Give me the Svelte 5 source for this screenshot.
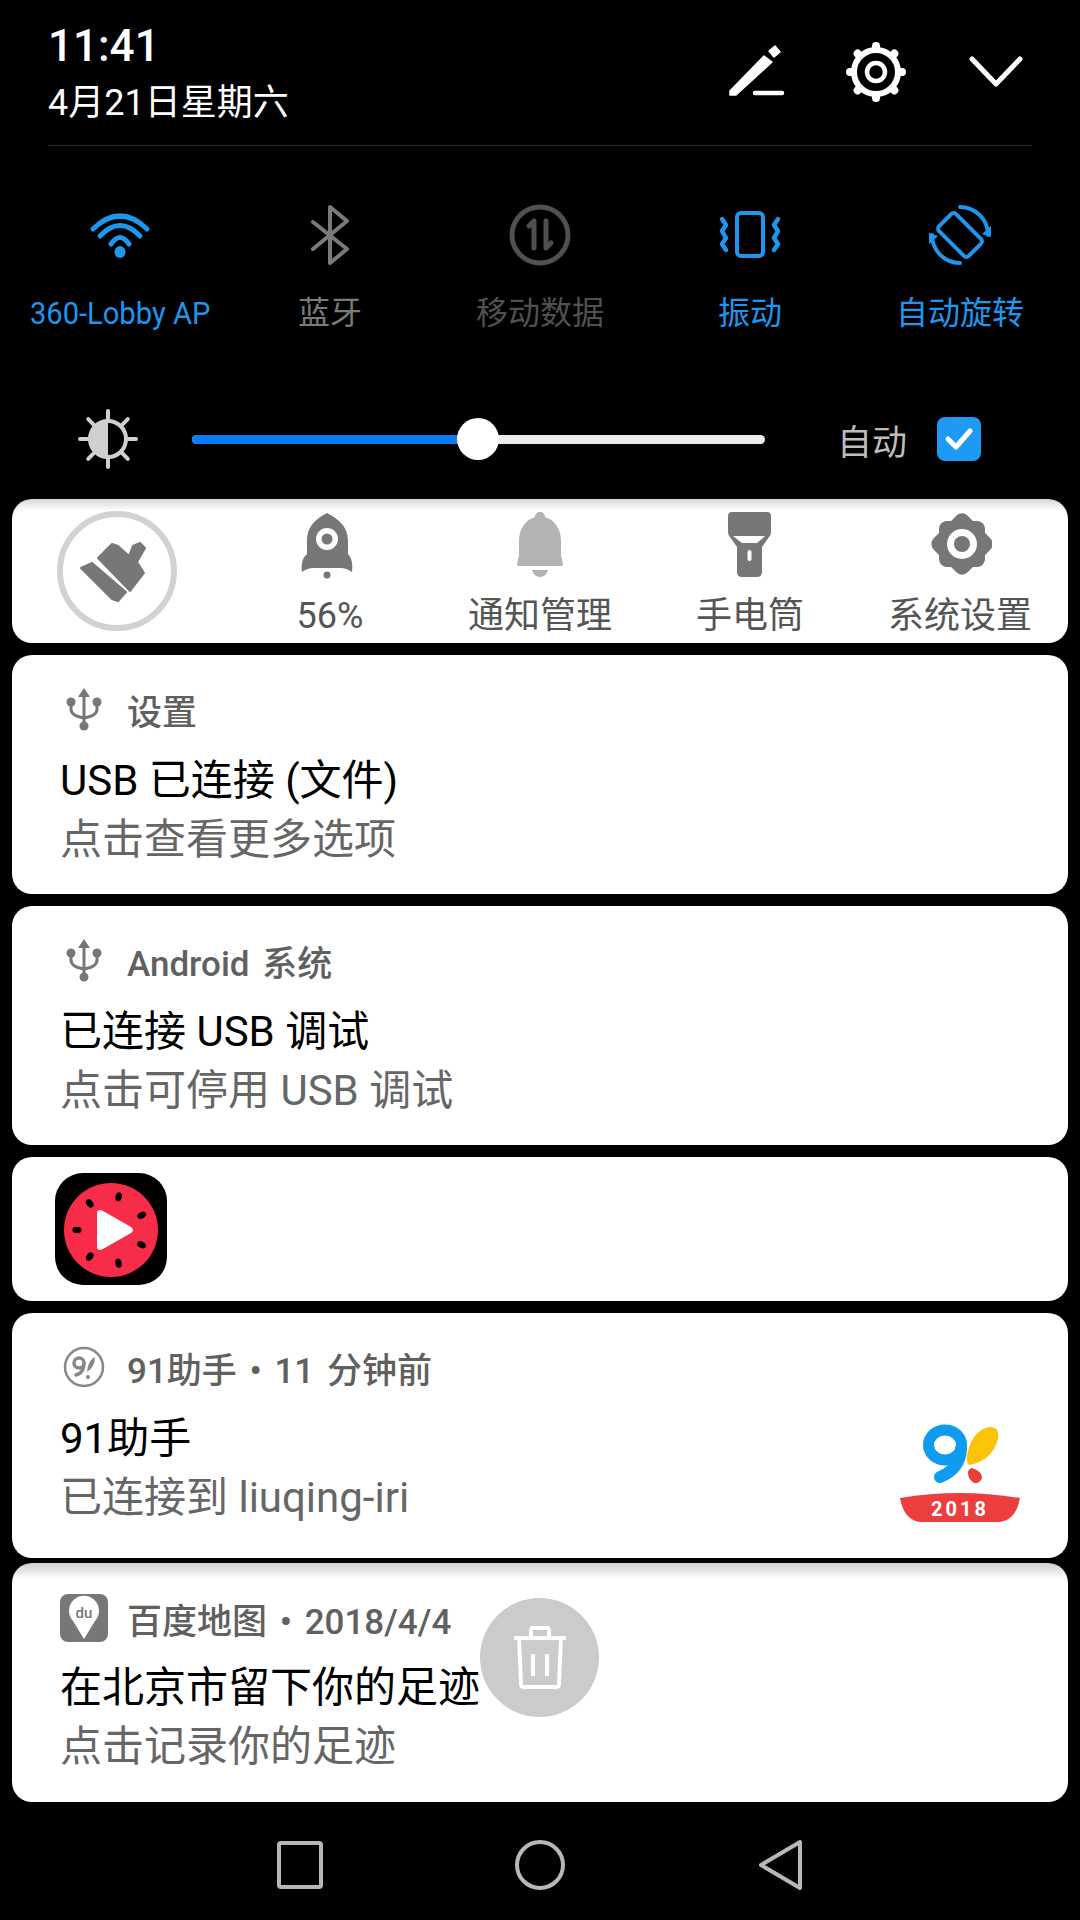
<script>
  const toggles = [
    { id: "wifi", label: "360-Lobby AP", tone: "on", narrow: true },
    { id: "bt", label: "蓝牙", tone: "off" },
    { id: "data", label: "移动数据", tone: "dim" },
    { id: "vibrate", label: "振动", tone: "on" },
    { id: "rotate", label: "自动旋转", tone: "on" }
  ];
  const rays = [0, 45, 90, 135, 180, 225, 270, 315];
  const seeds = [13, 64.4, 115.8, 167.2, 218.6, 270, 321.4];
  const teeth = [0, 45, 90, 135, 180, 225, 270, 315];
</script>

<div class="screen">
  <header class="head">
    <div class="clock">
      <div class="time">11:41</div>
      <div class="date">4月21日星期六</div>
    </div>
    <div class="head-icons">
      <svg width="60" height="60" viewBox="0 0 60 60" fill="#fff" stroke="#fff" stroke-linecap="round" stroke-linejoin="round">
        <path d="M4 49 V53 H10 L46 20 L38 14 Z" stroke-width="1.5" />
        <path d="M43 9 L49 4 L54 10 L48 15 Z" stroke-width="1.5" />
        <path d="M29 51 H56" stroke-width="4.5" />
      </svg>
      <svg width="64" height="64" viewBox="0 0 64 64" fill="none" stroke="#fff">
        {#each teeth as a}
          <path d="M32 6 V9" stroke-width="8" stroke-linecap="round" transform="rotate({a} 32 32)" />
        {/each}
        <circle cx="32" cy="32" r="22" stroke-width="6" fill="#000" />
        <circle cx="32" cy="32" r="9" stroke-width="4.5" />
      </svg>
      <svg width="60" height="60" viewBox="0 0 60 60" fill="none" stroke="#fff" stroke-width="5" stroke-linecap="round" stroke-linejoin="round">
        <path d="M6 17 L30 42 L54 17" />
      </svg>
    </div>
  </header>
  <div class="rule"></div>

  <section class="toggles">
    {#each toggles as t}
      <div class="toggle {t.tone}">
        <svg width="64" height="64" viewBox="0 0 64 64" fill="none" stroke="currentColor" stroke-linecap="round" stroke-linejoin="round">
          {#if t.id === "wifi"}
            <path d="M5 26 Q32 0 59 26" stroke-width="5" />
            <path d="M12 33 Q32 12 52 33" stroke-width="5" />
            <path d="M23 41 Q32 28 41 41" stroke-width="5" />
            <ellipse cx="32" cy="49" rx="5.5" ry="6" fill="currentColor" stroke="none" />
          {:else if t.id === "bt"}
            <path d="M15 19 L49 46 L32 60 V4 L49 18 L15 46" stroke-width="4" />
          {:else if t.id === "data"}
            <circle cx="32" cy="32" r="28" stroke-width="5" />
            <path d="M21 23 L26 18 V45 M38 18 V45 L43 40" stroke-width="5" />
          {:else if t.id === "vibrate"}
            <rect x="19" y="10" width="26" height="43" rx="4" stroke-width="4" />
            <path d="M4 16 L8 22 L4 28 L8 35 L4 41 L8 47" stroke-width="4.5" />
            <path d="M60 16 L56 22 L60 28 L56 35 L60 41 L56 47" stroke-width="4.5" />
          {:else}
            <rect x="20" y="11" width="24" height="42" rx="3.5" stroke-width="4" transform="rotate(-45 32 32)" />
            <path d="M32 4 A28 28 0 0 1 60 32" stroke-width="4" />
            <path d="M32 60 A28 28 0 0 1 4 32" stroke-width="4" />
            <path d="M63 34 V23 L54 31 Z" fill="currentColor" stroke="none" />
            <path d="M1 30 V41 L10 33 Z" fill="currentColor" stroke="none" />
          {/if}
        </svg>
        <span class="toggle-label" class:narrow={t.narrow}>{t.label}</span>
      </div>
    {/each}
  </section>

  <section class="brightness">
    <svg class="sun" width="60" height="60" viewBox="0 0 60 60" stroke="#d0d0d0" stroke-linecap="round">
      {#each rays as a}
        <path d="M30 2 V10" stroke-width="4" transform="rotate({a} 30 30)" />
      {/each}
      <circle cx="30" cy="30" r="18" fill="none" stroke-width="4" />
      <path d="M30 12 A18 18 0 0 0 30 48 Z" fill="#d0d0d0" stroke="none" />
    </svg>
    <div class="track">
      <div class="fill" style="width: {285}px"></div>
      <div class="thumb"></div>
    </div>
    <span class="auto">自动</span>
    <div class="check">
      <svg width="44" height="44" viewBox="0 0 44 44" fill="none" stroke="#fff" stroke-width="5" stroke-linecap="round" stroke-linejoin="round">
        <path d="M11 22 L19 30 L33 14" />
      </svg>
    </div>
  </section>

  <div class="cards">
    <div class="card shortcuts">
      <div class="cleaner">
        <svg width="120" height="120" viewBox="0 0 120 120">
          <circle cx="60" cy="60" r="57" fill="none" stroke="#d2d2d2" stroke-width="6" />
          <g fill="#777" stroke="#777" stroke-width="2" stroke-linejoin="round">
            <path d="M24 57 L35 52 L69 81 L61 90 L55 88 Z" />
            <path d="M41 47 L55 33 L61 35 L72 45 L76 35 L83 32 L88 37 L80 51 L87 62 L73 80 Z" />
          </g>
        </svg>
      </div>
      <div class="shortcut">
        <svg width="60" height="68" viewBox="0 0 60 68" fill="#777">
          <path d="M27 2 C38 8 48 15 48 30 V43 C52 47 53 54 52 61 C47 57 42 57 38 57 H16 C12 57 7 57 2 61 C1 54 2 47 7 43 V30 C7 15 16 8 27 2 Z" />
          <circle cx="27" cy="28" r="11" fill="#fff" />
          <circle cx="27" cy="28" r="5.5" />
          <circle cx="27" cy="64" r="3.5" />
        </svg>
        <span>56%</span>
      </div>
      <div class="shortcut">
        <svg width="60" height="68" viewBox="0 0 60 68" fill="#b4b4b4">
          <path d="M30 1 C33 1 35 3 35 6 C45 9 51 18 51 30 V44 L53 53 Q53 55 51 55 H9 Q7 55 7 53 L9 44 V30 C9 18 15 9 25 6 C25 3 27 1 30 1 Z" />
          <path d="M22 59 H38 Q36 66 30 66 Q24 66 22 59 Z" />
        </svg>
        <span>通知管理</span>
      </div>
      <div class="shortcut">
        <svg width="60" height="68" viewBox="0 0 60 68">
          <path d="M12 1 H47 Q51 1 51 5 V21 Q51 24 49 26 L42 36 V61 Q42 66 37 66 H22 Q17 66 17 61 V36 L10 26 Q8 24 8 21 V5 Q8 1 12 1 Z" fill="#777" />
          <path d="M13 25 H45 L37 32 H22 Z" fill="#fff" />
          <rect x="27.5" y="39" width="4" height="11" rx="2" fill="#fff" />
        </svg>
        <span>手电筒</span>
      </div>
      <div class="shortcut">
        <svg width="64" height="68" viewBox="0 0 64 68">
          <rect x="11" y="10" width="46" height="46" rx="8" fill="#777" />
          <rect x="10" y="9" width="48" height="48" rx="8" fill="#777" transform="rotate(45 34 33)" />
          <circle cx="34" cy="33" r="15" fill="#fff" />
          <circle cx="34" cy="33" r="8" fill="#777" />
        </svg>
        <span>系统设置</span>
      </div>
    </div>

    <div class="card note">
      <div class="note-head">
        <svg class="note-icon" width="44" height="44" viewBox="0 0 44 44" fill="none" stroke="#777" stroke-width="3">
          <path d="M22 6 V38" />
          <path d="M22 1 L28 10 H16 Z" fill="#777" stroke="none" />
          <path d="M9 16 V22 Q9 29 22 31 Q35 29 35 22 V16" />
          <circle cx="9" cy="15" r="4.5" fill="#777" stroke="none" />
          <circle cx="35" cy="15" r="4.5" fill="#777" stroke="none" />
          <circle cx="22" cy="39" r="4.5" fill="#777" stroke="none" />
        </svg>
        <span>设置</span>
      </div>
      <div class="note-title">USB 已连接 (文件)</div>
      <div class="note-sub">点击查看更多选项</div>
    </div>

    <div class="card note">
      <div class="note-head">
        <svg class="note-icon" width="44" height="44" viewBox="0 0 44 44" fill="none" stroke="#777" stroke-width="3">
          <path d="M22 6 V38" />
          <path d="M22 1 L28 10 H16 Z" fill="#777" stroke="none" />
          <path d="M9 16 V22 Q9 29 22 31 Q35 29 35 22 V16" />
          <circle cx="9" cy="15" r="4.5" fill="#777" stroke="none" />
          <circle cx="35" cy="15" r="4.5" fill="#777" stroke="none" />
          <circle cx="22" cy="39" r="4.5" fill="#777" stroke="none" />
        </svg>
        <span>Android 系统</span>
      </div>
      <div class="note-title">已连接 USB 调试</div>
      <div class="note-sub">点击可停用 USB 调试</div>
    </div>

    <div class="card video">
      <svg width="112" height="112" viewBox="0 0 112 112">
        <rect width="112" height="112" rx="28" fill="#000" />
        <circle cx="56" cy="57" r="47" fill="#f72c48" />
        {#each seeds as a}
          <ellipse cx="56" cy="23" rx="3.2" ry="4.6" fill="#000" transform="rotate({a} 56 57)" />
        {/each}
        <path d="M42 41 Q42 35 48 38 L76 54 Q80 57 76 60 L48 76 Q42 79 42 73 Z" fill="#fff" />
      </svg>
    </div>

    <div class="card note with-logo">
      <div class="note-body">
        <div class="note-head">
          <svg class="note-icon" width="44" height="44" viewBox="0 0 44 44" fill="none" stroke="#888">
            <circle cx="22" cy="22" r="19" stroke-width="2.5" />
            <circle cx="17" cy="18" r="5" stroke-width="3.5" />
            <path d="M22 18 Q22 28 14 30" stroke-width="3.5" stroke-linecap="round" />
            <path d="M25 27 Q26 15 33 12 Q33 22 25 27 Z" fill="#888" stroke="none" />
            <circle cx="26" cy="32" r="2" fill="#888" stroke="none" />
          </svg>
          <span>91助手 • 11 分钟前</span>
        </div>
        <div class="note-title">91助手</div>
        <div class="note-sub">已连接到 liuqing-iri</div>
      </div>
      <svg class="logo91" width="124" height="100" viewBox="0 0 124 100">
        <ellipse cx="45" cy="22" rx="16.5" ry="15" fill="none" stroke="#0f9bee" stroke-width="11" />
        <path d="M61 26 Q60 46 40 54" fill="none" stroke="#0f9bee" stroke-width="12" stroke-linecap="round" />
        <path d="M69 42 Q65 38 68 28 Q74 6 90 4 Q100 4 98 16 Q92 38 69 42 Z" fill="#fcc30b" />
        <path d="M72 45 Q82 48 82 55 Q80 61 74 60 Q68 56 68 50 Q68 46 72 45 Z" fill="#e8403c" />
        <path d="M0 75 Q60 65 120 75 Q116 97 100 99 H20 Q4 97 0 75 Z" fill="#ec3e3e" />
        <text x="60" y="93" class="year">2018</text>
      </svg>
    </div>

    <div class="card note last">
      <div class="note-head">
        <div class="du">
          <svg width="48" height="48" viewBox="0 0 48 48">
            <rect width="48" height="48" rx="8" fill="#777" />
            <path d="M24 45 L13 27 A15 15 0 1 1 35 27 Z" fill="#fff" />
            <text x="24" y="24" class="du-text">du</text>
          </svg>
        </div>
        <span>百度地图 • 2018/4/4</span>
      </div>
      <div class="note-title">在北京市留下你的足迹</div>
      <div class="note-sub">点击记录你的足迹</div>
      <div class="trash">
        <svg width="60" height="64" viewBox="0 0 60 64" fill="none" stroke="#fff" stroke-width="4" stroke-linejoin="round">
          <path d="M4 12 H56" />
          <path d="M21 11 V4 Q21 2 23 2 H37 Q39 2 39 4 V11" />
          <path d="M9 12 L11 58 Q11 61 14 61 H46 Q49 61 49 58 L51 12" />
          <path d="M23 28 V50 M37 28 V50" />
        </svg>
      </div>
    </div>
  </div>

  <nav class="nav">
    <svg width="60" height="60" viewBox="0 0 60 60" fill="none" stroke="#b8b8b8" stroke-width="4" stroke-linejoin="round"><rect x="9" y="8" width="42" height="44" rx="2" /></svg>
    <svg width="60" height="60" viewBox="0 0 60 60" fill="none" stroke="#b8b8b8" stroke-width="4"><circle cx="30" cy="30" r="23" /></svg>
    <svg width="60" height="60" viewBox="0 0 60 60" fill="none" stroke="#b8b8b8" stroke-width="4" stroke-linejoin="round"><path d="M11 30 L50 7 V53 Z" /></svg>
  </nav>
</div>

<style>
  :global(body) {
    margin: 0;
    background: #000;
  }
  .screen {
    width: 1080px;
    height: 1920px;
    background: #000;
    overflow: hidden;
    display: flex;
    flex-direction: column;
    font-family: Roboto, "Noto Sans CJK SC", sans-serif;
  }
  .head {
    display: flex;
    justify-content: space-between;
    padding: 22px 54px 0 48px;
    height: 122px;
    box-sizing: border-box;
  }
  .time {
    color: #fff;
    font-size: 44px;
    line-height: 48px;
    font-weight: 500;
  }
  .date {
    color: #fff;
    font-size: 36px;
    line-height: 44px;
    margin-top: 11px;
  }
  .head-icons {
    display: flex;
    align-items: center;
    gap: 58px;
    height: 100px;
  }
  .rule {
    height: 1px;
    margin: 23px 48px 0;
    background: #2a2a2a;
  }
  .toggles {
    display: grid;
    grid-template-columns: repeat(5, 210px);
    padding: 57px 15px 0;
  }
  .toggle {
    display: flex;
    flex-direction: column;
    align-items: center;
  }
  .toggle svg {
    display: block;
  }
  .toggle-label {
    font-size: 32px;
    line-height: 44px;
    margin-top: 24px;
    white-space: nowrap;
  }
  .narrow {
    transform: scaleX(0.91);
  }
  .on {
    color: #1e96ee;
  }
  .off {
    color: #7a7a7a;
  }
  .dim {
    color: #505050;
  }
  .brightness {
    display: flex;
    align-items: center;
    height: 60px;
    margin-top: 74px;
    padding-left: 78px;
  }
  .sun {
    flex: none;
  }
  .track {
    position: relative;
    width: 573px;
    height: 9px;
    margin-left: 54px;
    border-radius: 5px;
    background: #ececec;
  }
  .fill {
    height: 9px;
    border-radius: 5px 0 0 5px;
    background: #0a7cf4;
  }
  .thumb {
    position: absolute;
    left: 265px;
    top: -17px;
    width: 42px;
    height: 42px;
    border-radius: 50%;
    background: #fff;
  }
  .auto {
    margin-left: 72px;
    font-size: 35px;
    color: #bdbdbd;
  }
  .check {
    width: 44px;
    height: 44px;
    margin-left: 30px;
    border-radius: 8px;
    background: #1e9af5;
  }
  .check svg {
    display: block;
  }
  .cards {
    display: flex;
    flex-direction: column;
    gap: 12px;
    margin: 30px 12px 0;
  }
  .card {
    background: #fff;
    border-radius: 20px;
    box-sizing: border-box;
  }
  .shortcuts {
    display: grid;
    grid-template-columns: repeat(5, 210px);
    height: 144px;
    padding: 12px 3px 0;
    background: linear-gradient(#d8d8d8, #fff 12px);
  }
  .cleaner {
    margin-left: 42px;
  }
  .cleaner svg {
    display: block;
  }
  .shortcut {
    display: flex;
    flex-direction: column;
    align-items: center;
    color: #555;
    font-size: 36px;
    line-height: 44px;
    white-space: nowrap;
  }
  .shortcut svg {
    display: block;
    margin-bottom: 15px;
  }
  .note {
    position: relative;
    height: 239px;
    padding: 32px 50px 0 48px;
    color: #000;
  }
  .note-head {
    display: flex;
    align-items: center;
    height: 44px;
    color: #606060;
    font-size: 35px;
    font-weight: 500;
    word-spacing: 4px;
    white-space: nowrap;
  }
  .note-icon {
    flex: none;
    margin: 0 21px 0 2px;
  }
  .note-title {
    margin-top: 24px;
    font-size: 42px;
    line-height: 52px;
    white-space: nowrap;
  }
  .note-sub {
    margin-top: 7px;
    font-size: 42px;
    line-height: 52px;
    color: #666;
    white-space: nowrap;
  }
  .video {
    display: flex;
    align-items: center;
    height: 144px;
    padding-left: 43px;
  }
  .video svg {
    display: block;
  }
  .with-logo {
    display: flex;
    justify-content: space-between;
    height: 245px;
  }
  .logo91 {
    align-self: flex-end;
    margin: 0 -6px 35px 0;
  }
  .year {
    fill: #fff;
    font-size: 20px;
    font-weight: 700;
    letter-spacing: 3px;
    text-anchor: middle;
  }
  .last {
    margin-top: -7px;
    background: linear-gradient(#cfcfcf, #fff 16px);
    padding-top: 33px;
  }
  .last .note-title {
    margin-top: 22px;
  }
  .du {
    flex: none;
    margin-right: 19px;
  }
  .du svg {
    display: block;
  }
  .du-text {
    fill: #777;
    font-size: 15px;
    font-weight: 500;
    text-anchor: middle;
  }
  .trash {
    position: absolute;
    left: 468px;
    top: 35px;
    width: 119px;
    height: 119px;
    border-radius: 50%;
    background: #cbcbcb;
    display: flex;
    align-items: center;
    justify-content: center;
  }
  .nav {
    display: grid;
    grid-template-columns: repeat(3, 240px);
    justify-items: center;
    padding: 33px 180px 0;
  }
</style>
